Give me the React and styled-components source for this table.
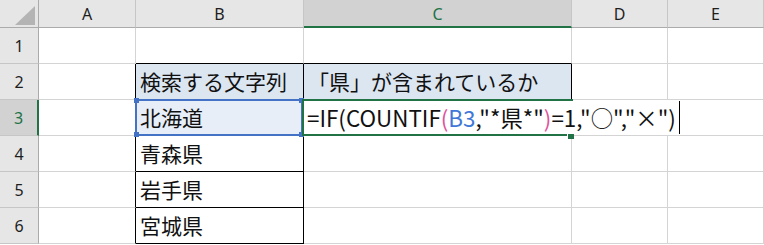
import React from "react";
import styled, { createGlobalStyle, css } from "styled-components";

const GREEN = "#217346";
const BLUE = "#4472c4";
const GRID = "#d4d4d4";
const HEAD_LINE = "#c6c6c6";
const HEAD_EDGE = "#ababab";

const Global = createGlobalStyle`
  html, body { margin: 0; padding: 0; background: #fff; }
  body { overflow: hidden; }
`;

const Sheet = styled.div`
  display: grid;
  grid-template-columns: 39px 97px 168px 268px 96px 1fr;
  grid-template-rows: 28px repeat(6, 36px);
  width: 764px;
  height: 245px;
  overflow: hidden;
  background: #fff;
  font-family: "Noto Sans CJK JP", "Noto Sans", sans-serif;
`;

const Corner = styled.div`
  position: relative;
  box-sizing: border-box;
  background: #e6e6e6;
  border-right: 1px solid ${HEAD_EDGE};
  border-bottom: 1px solid ${HEAD_EDGE};
  svg { display: block; }
`;

const ColHeader = styled.div`
  box-sizing: border-box;
  display: flex;
  align-items: center;
  justify-content: center;
  background: ${(p) => (p.$active ? "#d2d2d2" : "#e6e6e6")};
  border-right: 1px solid ${HEAD_LINE};
  border-bottom: ${(p) => (p.$active ? `2px solid ${GREEN}` : `1px solid ${HEAD_EDGE}`)};
  padding-top: ${(p) => (p.$active ? "1px" : "0")};
  font-family: "Noto Sans", "Open Sans", sans-serif;
  font-size: 16px;
  color: ${(p) => (p.$active ? GREEN : "#1e1e1e")};
`;

const RowHeader = styled.div`
  box-sizing: border-box;
  display: flex;
  align-items: center;
  justify-content: center;
  background: ${(p) => (p.$active ? "#d2d2d2" : "#e6e6e6")};
  border-right: ${(p) => (p.$active ? `2px solid ${GREEN}` : `1px solid ${HEAD_EDGE}`)};
  border-bottom: 1px solid ${HEAD_LINE};
  font-family: "Noto Sans", "Open Sans", sans-serif;
  font-size: 16px;
  color: ${(p) => (p.$active ? GREEN : "#1e1e1e")};
`;

const Cell = styled.div`
  position: relative;
  box-sizing: border-box;
  display: flex;
  align-items: center;
  padding: 0 4px;
  white-space: nowrap;
  font-size: 21px;
  line-height: 1;
  color: #111;
  background: ${(p) => p.$fill || "#fff"};
  border-right: 1px solid ${(p) => p.$right || GRID};
  border-bottom: 1px solid ${(p) => p.$bottom || GRID};
`;

/* coloured frame drawn round a cell that a formula refers to */
const RefBox = styled.div`
  position: absolute;
  top: -1px;
  left: -1px;
  right: 0;
  bottom: -1px;
  border: 2px solid ${BLUE};
  pointer-events: none;
  z-index: 4;
`;

const Handle = styled.span`
  position: absolute;
  width: 5px;
  height: 5px;
  background: ${BLUE};
  ${(p) => (p.$top ? css`top: -3px;` : css`bottom: -3px;`)}
  ${(p) => (p.$left ? css`left: -3px;` : css`right: -3px;`)}
`;

/* active cell outline */
const ActiveFrame = styled.div`
  position: absolute;
  top: -1px;
  left: -2px;
  right: -2px;
  bottom: -1px;
  border-top: 2px solid ${GREEN};
  border-left: 2px solid ${GREEN};
  pointer-events: none;
  z-index: 5;
  &::after {
    content: "";
    position: absolute;
    left: -2px;
    right: 6px;
    bottom: 0;
    height: 2px;
    background: ${GREEN};
  }
`;

const FillHandle = styled.span`
  position: absolute;
  right: -3px;
  bottom: -4px;
  width: 6px;
  height: 5px;
  background: ${GREEN};
  box-shadow: -1px 0 0 #fff;
  z-index: 6;
`;

/* in-cell editor that spills over the neighbouring cells */
const Editor = styled.div`
  position: absolute;
  top: 0;
  bottom: 0;
  left: 0;
  min-width: 100%;
  width: max-content;
  display: flex;
  align-items: center;
  padding: 0 3px 0 3px;
  box-sizing: border-box;
  background: #fff;
  z-index: 3;
  font-size: 22.4px;
  line-height: 1;
  color: #111;
  white-space: nowrap;
`;

const Tok = styled.span`
  color: ${(p) => p.$c || "inherit"};
`;

const Caret = styled.span`
  display: inline-block;
  width: 1px;
  height: 33px;
  margin-left: 3px;
  background: #000;
`;

const cols = ["A", "B", "C", "D", "E"];

const bValues = {
  2: "検索する文字列",
  3: "北海道",
  4: "青森県",
  5: "岩手県",
  6: "宮城県",
};

function Formula() {
  return (
    <Editor>
      <Tok>=IF(COUNTIF</Tok>
      <Tok $c="#e0529c">(</Tok>
      <Tok $c="#3f78d8">B3</Tok>
      <Tok>,"*県*"</Tok>
      <Tok $c="#e0529c">)</Tok>
      <Tok>=1,"○","×")</Tok>
      <Caret />
    </Editor>
  );
}

export default function App() {
  const rows = [1, 2, 3, 4, 5, 6];
  return (
    <>
      <Global />
      <Sheet>
        <Corner>
          <svg width="38" height="27" viewBox="0 0 38 27">
            <polygon points="15,25 35,6 35,25" fill="#b4b4b4" />
          </svg>
        </Corner>
        {cols.map((c) => (
          <ColHeader key={c} $active={c === "C"}>
            {c}
          </ColHeader>
        ))}
        {rows.map((r) => {
          const inTable = r >= 2;
          return (
            <React.Fragment key={r}>
              <RowHeader $active={r === 3}>{r}</RowHeader>
              <Cell $right={inTable ? "#000" : undefined} />
              <Cell
                $right={inTable ? "#000" : undefined}
                $bottom="#000"
                $fill={r === 2 ? "#dce6f1" : r === 3 ? "#e7eef8" : undefined}
              >
                {bValues[r]}
                {r === 3 && (
                  <RefBox>
                    <Handle $top $left />
                    <Handle $top />
                    <Handle $left />
                    <Handle />
                  </RefBox>
                )}
              </Cell>
              <Cell
                $right={r === 2 ? "#000" : undefined}
                $bottom={r === 1 || r === 2 ? "#000" : undefined}
                $fill={r === 2 ? "#dce6f1" : undefined}
              >
                {r === 2 && "「県」が含まれているか"}
                {r === 3 && (
                  <>
                    <Formula />
                    <ActiveFrame />
                    <FillHandle />
                  </>
                )}
              </Cell>
              <Cell />
              <Cell />
            </React.Fragment>
          );
        })}
      </Sheet>
    </>
  );
}
